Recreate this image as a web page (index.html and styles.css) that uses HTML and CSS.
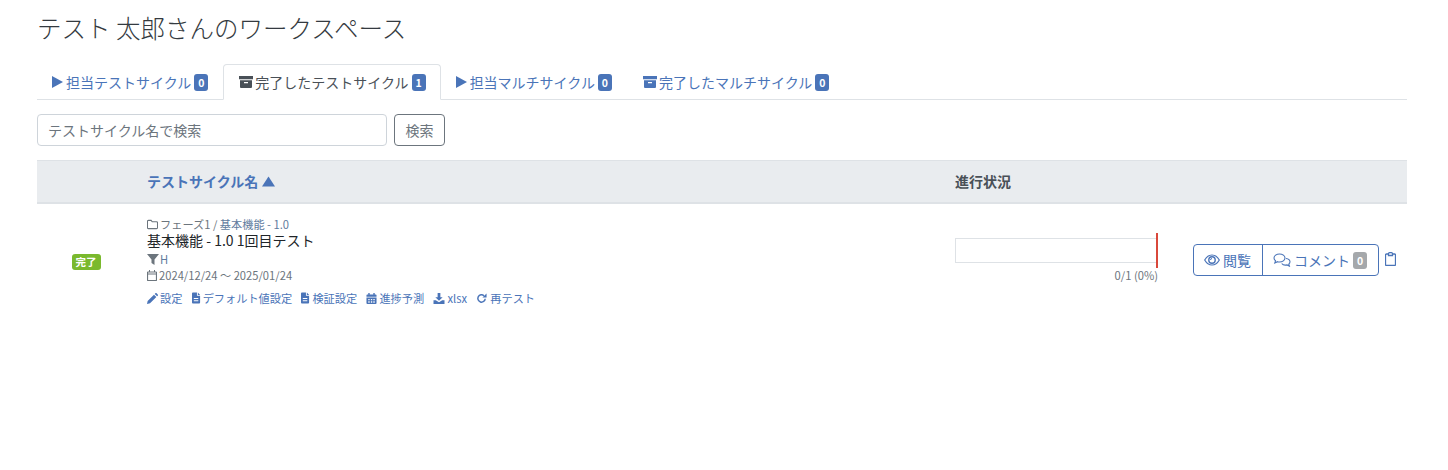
FILE: index.html
```html
<!DOCTYPE html>
<html lang="ja">

<head>
    <meta charset="UTF-8">
    <title>ワークスペース</title>
    <link rel="stylesheet" href="styles.css">
</head>

<body>
    <svg class="defs" width="0" height="0">
        <symbol id="i-play" viewBox="0 0 12 14"><path d="M0 0.5 12 7 0 13.5z" fill="currentColor"/></symbol>
        <symbol id="i-archive" viewBox="0 0 14 12"><path d="M0 0h14v3.2H0zM1 4.2h12V11a1 1 0 0 1-1 1H2a1 1 0 0 1-1-1zM5 6v1.2h4V6z" fill="currentColor" fill-rule="evenodd"/></symbol>
        <symbol id="i-file" viewBox="0 0 10 12"><path d="M1 0h4.500v3.500H9V11a1 1 0 0 1-1 1H1a1 1 0 0 1-1-1V1a1 1 0 0 1 1-1zM6.500 0 9 2.600H6.500zM2 6v1h5V6zM2 8.500v1h5v-1z" fill="currentColor" fill-rule="evenodd"/></symbol>
    </svg>
    <div class="page">
        <h1 class="title">テスト 太郎さんのワークスペース</h1>

        <ul class="tabs">
            <li class="tab"><svg class="ic ic-play"><use href="#i-play"/></svg>担当テストサイクル<span class="count">0</span></li>
            <li class="tab active"><svg class="ic ic-archive"><use href="#i-archive"/></svg>完了したテストサイクル<span class="count">1</span></li>
            <li class="tab"><svg class="ic ic-play"><use href="#i-play"/></svg>担当マルチサイクル<span class="count">0</span></li>
            <li class="tab"><svg class="ic ic-archive"><use href="#i-archive"/></svg>完了したマルチサイクル<span class="count">0</span></li>
        </ul>

        <form class="search">
            <input class="search-input" type="text" placeholder="テストサイクル名で検索">
            <button class="search-btn" type="button">検索</button>
        </form>

        <table class="cycles">
            <thead>
                <tr>
                    <th class="col-status"></th>
                    <th class="col-name"><a class="sort">テストサイクル名<svg class="sort-arrow" viewBox="0 0 14 11"><path d="M7 0 14 11H0z" fill="currentColor"/></svg></a></th>
                    <th class="col-progress">進行状況</th>
                    <th class="col-actions"></th>
                </tr>
            </thead>
            <tbody>
                <tr>
                    <td class="status-cell"><span class="done">完了</span></td>
                    <td class="name-cell">
                        <div class="crumb"><svg class="mini" viewBox="0 0 12 11"><path d="M1.500 1h3l1.200 1.500h4.800a1 1 0 0 1 1 1V9a1 1 0 0 1-1 1h-9a1 1 0 0 1-1-1V2a1 1 0 0 1 1-1z" fill="none" stroke="currentColor" stroke-width="1.200"/></svg>フェーズ1 / <a class="muted">基本機能 - 1.0</a></div>
                        <div class="cycle-name">基本機能 - 1.0 1回目テスト</div>
                        <div class="meta"><svg class="mini funnel" viewBox="0 0 12 11"><path d="M0 0h12L7.500 5.500V11l-3-2V5.500z" fill="currentColor"/></svg><a class="muted">H</a></div>
                        <div class="meta dates"><svg class="mini cal" viewBox="0 0 10 11"><path d="M1 2h8a.5.5 0 0 1 .5.500V10a.5.5 0 0 1-.5.5H1a.5.5 0 0 1-.5-.5V2.500A.5.500 0 0 1 1 2zM.5 4h9" fill="none" stroke="currentColor" stroke-width="1.200"/><path d="M2 0h1v2H2zM7 0h1v2H7z" fill="currentColor"/></svg>2024/12/24 〜 2025/01/24</div>
                        <div class="links">
                            <a class="link"><svg class="mini" viewBox="0 0 12 12"><path d="M0 12l.7-3.300L7.600 1.800l2.600 2.600-6.900 6.900zM8.400 1l.7-.7a1 1 0 0 1 1.400 0l1.200 1.200a1 1 0 0 1 0 1.400l-.7.7z" fill="currentColor"/></svg>設定</a>
                            <a class="link"><svg class="mini file"><use href="#i-file"/></svg>デフォルト値設定</a>
                            <a class="link"><svg class="mini file"><use href="#i-file"/></svg>検証設定</a>
                            <a class="link"><svg class="mini" viewBox="0 0 11 12"><path d="M2 0h1.500v1.500h4V0H9v1.500h1a1 1 0 0 1 1 1V4H0V2.500a1 1 0 0 1 1-1h1zM0 5h11v6a1 1 0 0 1-1 1H1a1 1 0 0 1-1-1zM2 6.500V8h1.500V6.500zM4.800 6.500V8h1.500V6.500zM7.500 6.500V8H9V6.500zM2 9v1.500h1.500V9zM4.800 9v1.500h1.500V9zM7.500 9v1.500H9V9z" fill="currentColor" fill-rule="evenodd"/></svg>進捗予測</a>
                            <a class="link"><svg class="mini dl" viewBox="0 0 12 12"><path d="M4.500 0h3v4.500H10L6 8.500 2 4.500h2.500zM0 8h2.500L6 10l3.500-2H12v4H0z" fill="currentColor"/></svg>xlsx</a>
                            <a class="link"><svg class="mini redo" viewBox="0 0 12 12"><path d="M10 6.200a4 4 0 1 1-1.300-3.200" fill="none" stroke="currentColor" stroke-width="1.600"/><path d="M11.500 0.500V5H7z" fill="currentColor"/></svg>再テスト</a>
                        </div>
                    </td>
                    <td class="progress-cell">
                        <div class="bar"></div>
                        <div class="bar-text">0/1 (0%)</div>
                    </td>
                    <td class="actions-cell">
                        <div class="actions">
                            <div class="btn-group">
                                <a class="btn"><svg class="btn-ic" viewBox="0 0 16 12"><path d="M.7 6C2.500 2.800 5 1 8 1s5.500 1.800 7.300 5c-1.800 3.200-4.300 5-7.300 5S2.500 9.200.7 6z" fill="none" stroke="currentColor" stroke-width="1.200"/><circle cx="8" cy="6" r="3.200" fill="none" stroke="currentColor" stroke-width="1.400"/><path d="M8 4.500A1.500 1.500 0 0 0 6.500 6" fill="none" stroke="currentColor"/></svg>閲覧</a>
                                <a class="btn"><svg class="btn-ic wide" viewBox="0 0 18 14"><path d="M6.500 1C3.500 1 1 2.800 1 5c0 1.100.6 2.100 1.500 2.800L1.800 10l2.700-1.300c.6.200 1.300.3 2 .3 3 0 5.500-1.800 5.500-4s-2.500-4-5.500-4z" fill="none" stroke="currentColor" stroke-width="1.100"/><path d="M13 5.500c2.300.3 4 1.700 4 3.300 0 .9-.5 1.700-1.200 2.300l.6 2-2.400-1.200c-2 .5-4.200 0-5.300-1.400" fill="none" stroke="currentColor" stroke-width="1.100"/></svg>コメント<span class="count gray">0</span></a>
                            </div>
                            <svg class="clip" viewBox="0 0 11 14"><path d="M3 2H1.500a1 1 0 0 0-1 1v9.500a1 1 0 0 0 1 1h8a1 1 0 0 0 1-1V3a1 1 0 0 0-1-1H8" fill="none" stroke="currentColor" stroke-width="1.300"/><path d="M3.500 3.500V1.700a1 1 0 0 1 1-1h2a1 1 0 0 1 1 1v1.800z" fill="none" stroke="currentColor" stroke-width="1.300"/></svg>
                        </div>
                    </td>
                </tr>
            </tbody>
        </table>
    </div>
</body>

</html>
```

FILE: styles.css
```css
* {
    box-sizing: border-box;
}

body {
    margin: 0;
    font-family: "Noto Sans CJK JP", "Noto Sans", sans-serif;
    font-size: 14px;
    line-height: 1.5;
    color: #212529;
    background: #fff;
}

a {
    color: #4a74b8;
    text-decoration: none;
}

.defs {
    position: absolute;
}

.page {
    width: 1370px;
    margin-left: 37px;
}

.title {
    margin: 0;
    padding-top: 10px;
    height: 64px;
    font-size: 24.500px;
    line-height: 36px;
    font-weight: 300;
    color: #343a40;
}

.tabs {
    display: flex;
    margin: 0;
    padding: 0;
    list-style: none;
    height: 36px;
    border-bottom: 1px solid #dee2e6;
}

.tab {
    display: flex;
    align-items: center;
    height: 36px;
    padding: 0 14px;
    color: #4a74b8;
    border: 1px solid transparent;
    border-radius: 4px 4px 0 0;
}

.tab.active {
    color: #495057;
    background: #fff;
    border-color: #dee2e6 #dee2e6 #fff;
}

.ic {
    flex: none;
}

.ic-play {
    width: 11px;
    height: 14px;
    margin-right: 3px;
}

.ic-archive {
    width: 14px;
    height: 12px;
    margin: 0 2px 0 1px;
}

.count {
    display: inline-block;
    margin-left: 3px;
    width: 14px;
    height: 17px;
    font-size: 10.500px;
    line-height: 17px;
    font-weight: 700;
    text-align: center;
    color: #fff;
    background: #4a74b8;
    border-radius: 3px;
}

.count.gray {
    background: #a5a8ab;
}

.search {
    display: flex;
    gap: 7px;
    padding-top: 14px;
    height: 60px;
}

.search-input {
    width: 350px;
    height: 32px;
    padding: 0 10px;
    font: inherit;
    color: #495057;
    border: 1px solid #ced4da;
    border-radius: 4px;
}

.search-input::placeholder {
    color: #6c757d;
    opacity: 1;
}

.search-btn {
    width: 51px;
    height: 32px;
    padding: 0;
    font: inherit;
    color: #6c757d;
    background: #fff;
    border: 1px solid #6c757d;
    border-radius: 4px;
}

.cycles {
    width: 100%;
    border-collapse: collapse;
    table-layout: fixed;
}

.cycles th {
    height: 42px;
    padding: 1px 10px 0;
    text-align: left;
    font-weight: 700;
    color: #495057;
    background: #e9ecef;
    border-top: 1px solid #dee2e6;
    border-bottom: 2px solid #dee2e6;
}

.col-status {
    width: 100px;
}

.col-name {
    width: 808px;
}

.col-progress {
    width: 228px;
}

.col-actions {
    width: 234px;
}

.sort {
    display: flex;
    align-items: center;
    gap: 4px;
}

.sort-arrow {
    width: 13px;
    height: 11px;
}

.cycles td {
    padding: 13px 10px 7px;
    vertical-align: middle;
}

.cycles .status-cell {
    padding-top: 11px;
    padding-right: 12px;
    text-align: center;
}

.done {
    display: inline-block;
    height: 16px;
    padding: 0 4px;
    font-size: 10.500px;
    line-height: 16px;
    font-weight: 700;
    color: #fff;
    background: #7ab92e;
    border-radius: 3px;
}

.crumb,
.meta,
.links,
.bar-text {
    font-size: 11.200px;
    color: #6c757d;
}

.muted {
    color: #5f7b9e;
}

.crumb,
.meta {
    display: flex;
    align-items: center;
    height: 15px;
    line-height: 15px;
    white-space: pre;
}

.cycle-name {
    height: 19px;
    line-height: 19px;
    margin-top: -1px;
    margin-bottom: 2px;
    font-size: 14px;
    color: #212529;
}

.dates {
    margin-top: 1px;
}

.mini {
    flex: none;
    width: 11px;
    height: 11px;
    margin-right: 2px;
}

.mini.funnel {
    width: 12px;
    margin-right: 1px;
}

.mini.cal {
    width: 10px;
}

.mini.file {
    width: 9px;
    height: 12px;
}

.mini.dl {
    width: 12px;
}

.mini.redo {
    margin-right: 3px;
}

.links {
    display: flex;
    gap: 9.250px;
    margin-top: 8px;
    height: 15px;
    line-height: 15px;
}

.link {
    display: flex;
    align-items: center;
    color: #4a74b8;
}

.cycles .progress-cell {
    padding-top: 12px;
    padding-right: 0;
}

.bar {
    position: relative;
    width: 203px;
    height: 25px;
    border: 1px solid #dee2e6;
    border-right: 0;
}

.bar::after {
    content: "";
    position: absolute;
    right: 0;
    top: -6px;
    width: 2px;
    height: 35px;
    background: #d9483b;
}

.bar-text {
    width: 203px;
    margin-top: 5px;
    line-height: 15px;
    text-align: right;
}

.cycles .actions-cell {
    padding-top: 11px;
}

.actions {
    display: flex;
    align-items: center;
    gap: 6px;
    margin-left: 10px;
}

.btn-group {
    display: flex;
    flex: none;
    height: 32px;
    border: 1px solid #4a74b8;
    border-radius: 4px;
}

.btn {
    display: flex;
    align-items: center;
    padding: 0 11px 0 10px;
    color: #4a74b8;
    white-space: nowrap;
}

.btn + .btn {
    border-left: 1px solid #4a74b8;
}

.btn-ic {
    width: 16px;
    height: 12px;
    margin-right: 3px;
}

.btn-ic.wide {
    width: 18px;
    height: 14px;
}

.clip {
    flex: none;
    width: 11px;
    height: 14px;
    color: #4a74b8;
    margin-bottom: 2px;
}
```
